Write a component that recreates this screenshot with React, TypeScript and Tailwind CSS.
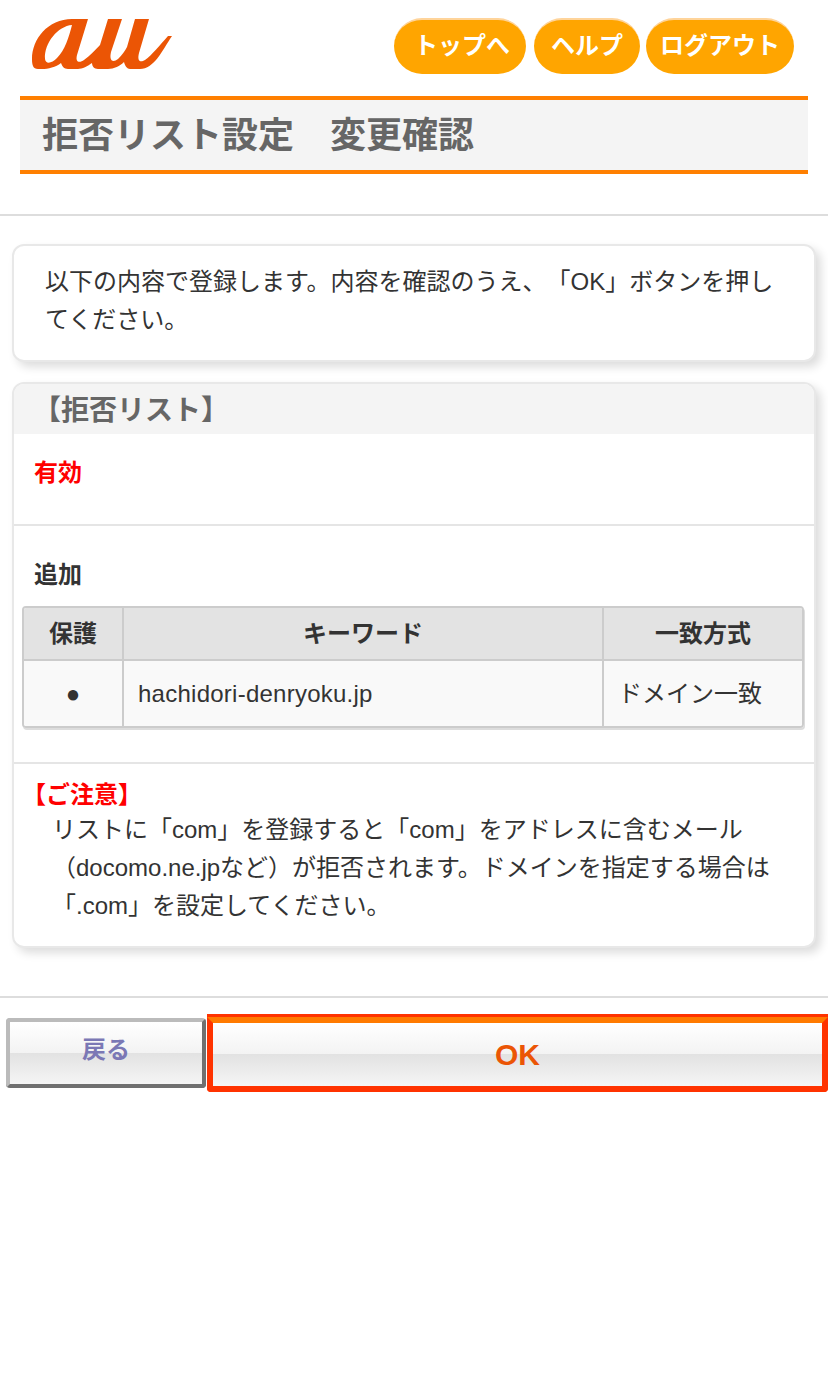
import React from "react";

function Logo() {
  return (
    <svg width="142" height="52" viewBox="0 0 142 52" className="block blur-[0.5px]">
      <path
        fill="#eb5505"
        fillRule="evenodd"
        d="M40,0 L56,0 L45,36 C43,44 48,44 52,41 C58,37 64,30 68,26 L76,0 L90,0 L79,33 C77,42 81,44 86,40 C90,36 93,32 95,28 L103,0 L117,0 L107,34 C105,42 108,44 113,41 C120,36 128,26 136,17 L140,17 C130,32 122,50 108,50 L98,50 C95,50 93,47 92,43 C88,47 82,50 76,50 L66,50 C62,50 60,47 60,44 C56,47 50,50 46,50 L36,50 C32,50 30,47 29,44 C24,48 16,50 10,50 L6,50 C1,50 0,46 0,40 C0,20 16,0 40,0 Z M40,6 C26,7 12,24 13,40 C14,46 20,44 25,39 C33,31 37,18 40,6 Z"
      />
    </svg>
  );
}

function Pill({ label, w, extra }: { label: string; w: string; extra?: string }) {
  return (
    <a className={`flex h-[56px] items-center justify-center rounded-[28px] border-t-2 border-[#ffd49a] bg-[#ffa500] pb-[2px] text-[24px] font-bold text-white ${w} ${extra ?? ""}`}>
      {label}
    </a>
  );
}

export default function App() {
  return (
    <div className="min-h-[1394px] bg-white text-[24px] leading-[38px] text-[#333] [font-family:'Liberation_Sans','Noto_Sans_CJK_JP',sans-serif] [text-spacing-trim:space-all]">
      <header className="flex h-[96px] items-start justify-between pl-[32px] pr-[34px]">
        <div className="pt-[19px]">
          <Logo />
        </div>
        <nav className="flex pt-[18px]">
          <Pill label="トップへ" w="w-[132px]" extra="pl-[4px]" />
          <Pill label="ヘルプ" w="w-[106px]" extra="ml-[8px]" />
          <Pill label="ログアウト" w="w-[148px]" extra="ml-[6px]" />
        </nav>
      </header>

      <h1 className="mx-[20px] flex h-[78px] items-center border-y-4 border-[#ff7f00] bg-[#f4f4f4] pl-[22px] pt-[2px] text-[36px] font-bold text-[#666]">
        拒否リスト設定　変更確認
      </h1>

      <hr className="mt-[40px] border-t-2 border-[#ddd]" />

      <section className="mx-[12px] mt-[28px] rounded-[12px] border-2 border-[#e8e8e8] bg-white pb-[21px] pl-[31px] pr-[24px] pt-[17px] shadow-[5px_5px_10px_#ddd]">
        <p>以下の内容で登録します。内容を確認のうえ、「OK」ボタンを押してください。</p>
      </section>

      <section className="mx-[12px] mt-[20px] overflow-hidden rounded-[12px] border-2 border-[#e8e8e8] bg-white shadow-[5px_5px_10px_#ddd]">
        <h2 className="flex h-[50px] items-center bg-[#f4f4f4] pl-[19px] pt-[3px] text-[28px] font-bold text-[#666]">
          【拒否リスト】
        </h2>
        <div className="h-[92px] border-b-2 border-[#e5e5e5] pl-[20px] pt-[20px] font-bold text-[#f00]">有効</div>
        <div className="border-b-2 border-[#e5e5e5] pb-[34px] pl-[8px] pr-[8px]">
          <p className="pl-[12px] pt-[30px] font-bold">追加</p>
          <div className="mt-[12px] w-[782px] overflow-hidden rounded-[4px] border-2 border-[#ccc] shadow-[1px_2px_0_#ddd]">
            <table className="w-full table-fixed border-collapse">
              <thead>
                <tr className="h-[52px] bg-[#e3e3e3]">
                  <th className="w-[99px] border-b-2 border-r-2 border-[#ccc] font-bold">保護</th>
                  <th className="w-[480px] border-b-2 border-r-2 border-[#ccc] font-bold">キーワード</th>
                  <th className="border-b-2 border-[#ccc] font-bold">一致方式</th>
                </tr>
              </thead>
              <tbody>
                <tr className="h-[66px] bg-[#f9f9f9]">
                  <td className="border-r-2 border-[#ccc] text-center">●</td>
                  <td className="border-r-2 border-[#ccc] pl-[14px] tracking-[0.25px]">hachidori-denryoku.jp</td>
                  <td className="pl-[14px]">ドメイン一致</td>
                </tr>
              </tbody>
            </table>
          </div>
        </div>
        <div className="pb-[21px] pl-[8px] pr-[24px] pt-[15px]">
          <p className="font-bold leading-[32px] text-[#f00]">【ご注意】</p>
          <p className="pl-[30px]">
            リストに「com」を登録すると「com」をアドレスに含むメール（docomo.ne.jpなど）が拒否されます。ドメインを指定する場合は「.com」を設定してください。
          </p>
        </div>
      </section>

      <hr className="mt-[48px] border-t-2 border-[#ddd]" />

      <div className="flex items-start pl-[6px]">
        <button className="mt-[20px] h-[70px] w-[200px] overflow-hidden rounded-[4px] border-4 border-b-[#707070] border-l-[#bbb] border-r-[#707070] border-t-[#bbb] bg-[linear-gradient(#fff_0%,#f3f3f3_50%,#e2e2e2_50%,#f5f5f5_100%)] pb-[6px] text-[24px] font-bold text-[#7b78b5]">
          戻る
        </button>
        <button className="ml-[1px] mt-[19px] h-[75px] w-[621px] rounded-b-[4px] border-[6px] border-[#ff3300] border-t-[#ff7a00] bg-[linear-gradient(#fff_0%,#f3f3f3_50%,#e2e2e2_50%,#f5f5f5_100%)] text-[30px] font-bold text-[#eb5505] shadow-[0_-3px_0_#ff3300]">
          OK
        </button>
      </div>
    </div>
  );
}
